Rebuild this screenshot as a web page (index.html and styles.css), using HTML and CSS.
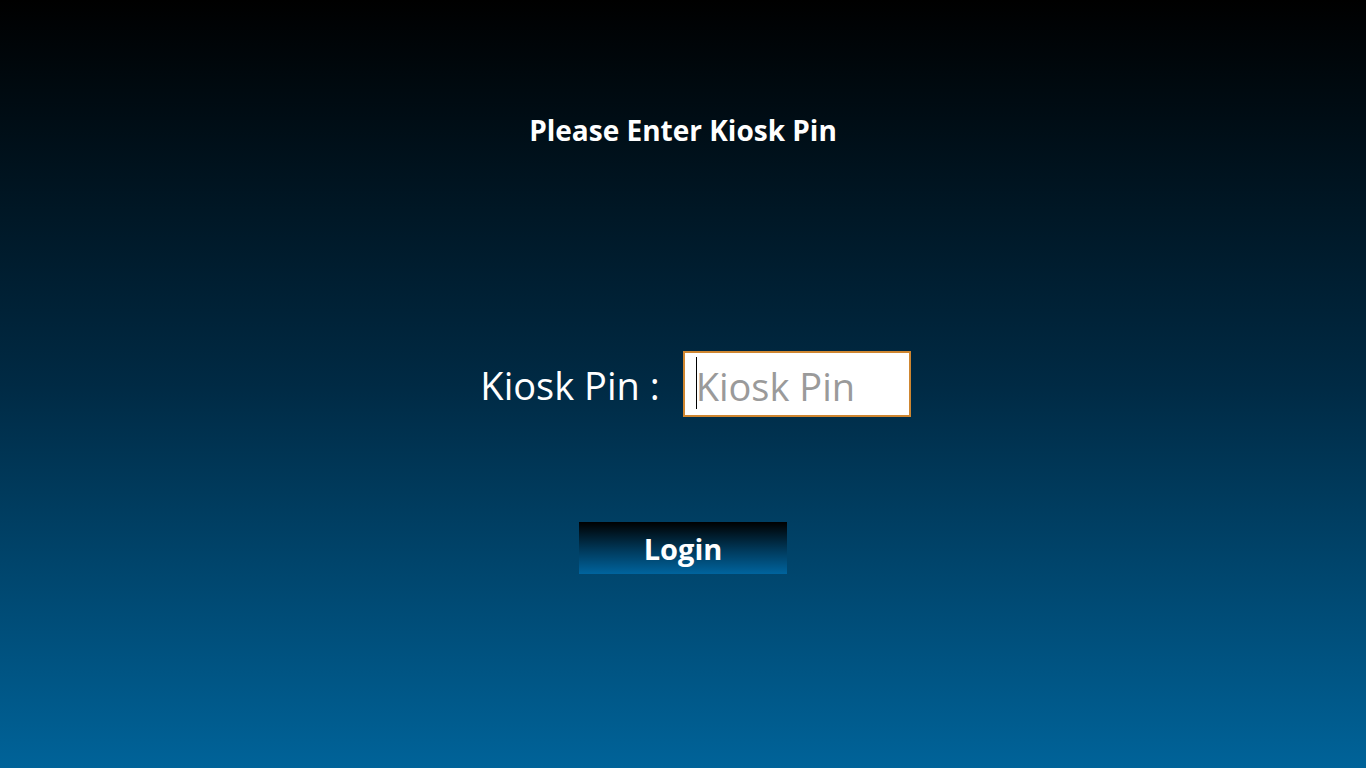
FILE: index.html
```html
<!DOCTYPE html>
<html>

<head>
  <title>Kiosk Login</title>
  <meta name="viewport" content="width=device-width, initial-scale=1">
  <link rel="stylesheet" href="styles.css">
</head>

<body>
  <div class="page">
    <h1 class="title">Please Enter Kiosk Pin</h1>
    <form class="pin-form">
      <div class="pin-row">
        <label for="kiosk-pin" class="pin-label">Kiosk Pin :</label>
        <div class="pin-box">
          <span class="caret"></span>
          <input type="text" id="kiosk-pin" class="pin-input" placeholder="Kiosk Pin">
        </div>
      </div>
      <button type="submit" class="login-btn">Login</button>
    </form>
  </div>
</body>

</html>
```

FILE: styles.css
```css
body {
  margin: 0;
  padding: 0;
  height: 100vh;
  overflow: hidden;
  font-family: "Open Sans", "Noto Sans", sans-serif;
  color: #ffffff;
  background: linear-gradient(to bottom, #000000 0%, #002a44 50%, #006399 100%);
}

.page {
  display: flex;
  flex-direction: column;
  align-items: center;
  padding-top: 110px;
}

.title {
  margin: 0;
  font-size: 28px;
  font-weight: bold;
  line-height: 40px;
}

.pin-form {
  display: flex;
  flex-direction: column;
  align-items: center;
  margin-top: 199px;
}

.pin-row {
  display: flex;
  align-items: center;
  gap: 23px;
  margin-left: 25px;
}

.pin-label {
  font-size: 38px;
  line-height: 66px;
  padding-top: 3px;
}

.pin-box {
  display: flex;
  align-items: center;
  width: 224px;
  height: 62px;
  background: #ffffff;
  border: 2px solid #cf8630;
  position: relative;
}

.caret {
  position: absolute;
  left: 11px;
  top: 4px;
  width: 1px;
  height: 52px;
  background: #000000;
}

.pin-input {
  width: 100%;
  border: none;
  outline: none;
  background: transparent;
  padding: 5px 0 0 11px;
  font-family: inherit;
  font-size: 38px;
  color: #000000;
}

.pin-input::placeholder {
  color: #9a9a9a;
}

.login-btn {
  margin-top: 104px;
  width: 208px;
  height: 52px;
  border: none;
  color: #ffffff;
  font-family: inherit;
  font-size: 29px;
  font-weight: bold;
  background: linear-gradient(to bottom, #000000 0%, #003a5c 55%, #00649e 100%);
  cursor: pointer;
}
```
